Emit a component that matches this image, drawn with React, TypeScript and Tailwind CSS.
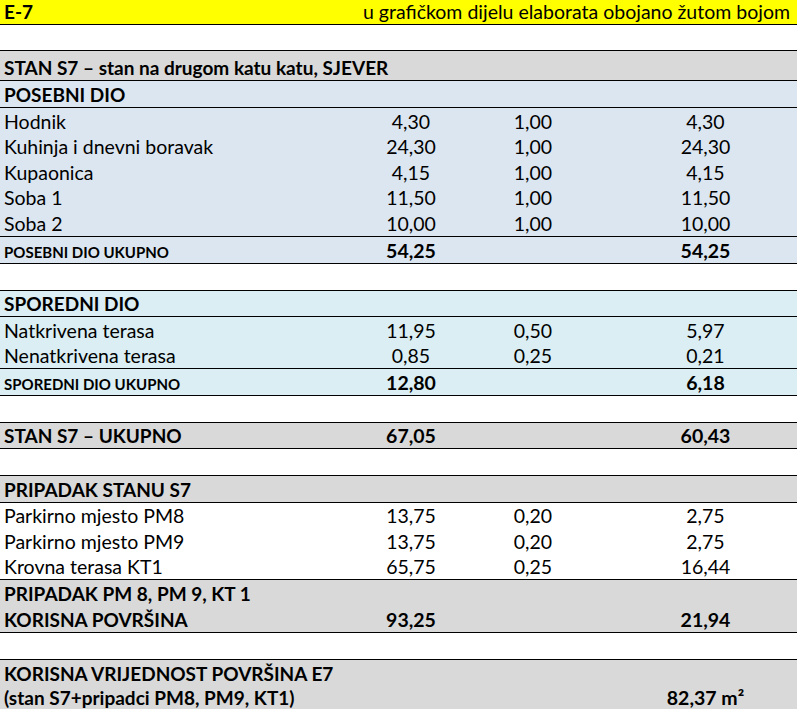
import React from "react";

type Row = {
  label?: string;
  a?: string;
  b?: string;
  c?: string;
  h: number;
  bg?: string;
  bold?: boolean;
  small?: boolean;
  top?: boolean;
  bottom?: boolean;
  flush?: boolean;
};

const rows: Row[] = [
  { h: 25, label: "" },
  { h: 29, top: true, bottom: true, bg: "bg-[#d9d9d9]", bold: true, label: "STAN S7 – stan na drugom katu katu, SJEVER" },
  { h: 26, bottom: true, bg: "bg-[#dce6f1]", bold: true, label: "POSEBNI DIO" },
  { h: 26, bg: "bg-[#dce6f1]", label: "Hodnik", a: "4,30", b: "1,00", c: "4,30" },
  { h: 25, bg: "bg-[#dce6f1]", label: "Kuhinja i dnevni boravak", a: "24,30", b: "1,00", c: "24,30" },
  { h: 26, bg: "bg-[#dce6f1]", label: "Kupaonica", a: "4,15", b: "1,00", c: "4,15" },
  { h: 25, bg: "bg-[#dce6f1]", label: "Soba 1", a: "11,50", b: "1,00", c: "11,50" },
  { h: 26, bottom: true, bg: "bg-[#dce6f1]", label: "Soba 2", a: "10,00", b: "1,00", c: "10,00" },
  { h: 26, bottom: true, bg: "bg-[#dce6f1]", bold: true, small: true, label: "POSEBNI DIO UKUPNO", a: "54,25", c: "54,25" },
  { h: 26, label: "" },
  { h: 25, top: true, bottom: true, bg: "bg-[#daeef3]", bold: true, label: "SPOREDNI DIO" },
  { h: 26, bg: "bg-[#daeef3]", label: "Natkrivena terasa", a: "11,95", b: "0,50", c: "5,97" },
  { h: 25, bottom: true, bg: "bg-[#daeef3]", label: "Nenatkrivena terasa", a: "0,85", b: "0,25", c: "0,21" },
  { h: 26, bottom: true, bg: "bg-[#daeef3]", bold: true, small: true, label: "SPOREDNI DIO UKUPNO", a: "12,80", c: "6,18" },
  { h: 26, label: "" },
  { h: 25, top: true, bottom: true, bg: "bg-[#d9d9d9]", bold: true, label: "STAN S7 – UKUPNO", a: "67,05", c: "60,43" },
  { h: 26, label: "" },
  { h: 26, top: true, bottom: true, bg: "bg-[#d9d9d9]", bold: true, label: "PRIPADAK STANU S7" },
  { h: 25, label: "Parkirno mjesto PM8", a: "13,75", b: "0,20", c: "2,75" },
  { h: 26, label: "Parkirno mjesto PM9", a: "13,75", b: "0,20", c: "2,75" },
  { h: 25, bottom: true, label: "Krovna terasa KT1", a: "65,75", b: "0,25", c: "16,44" },
  { h: 26, bg: "bg-[#d9d9d9]", bold: true, label: "PRIPADAK PM 8, PM 9, KT 1" },
  { h: 26, bottom: true, bg: "bg-[#d9d9d9]", bold: true, label: "KORISNA POVRŠINA", a: "93,25", c: "21,94" },
  { h: 26, label: "" },
  { h: 26, top: true, bg: "bg-[#d9d9d9]", bold: true, label: "KORISNA VRIJEDNOST POVRŠINA E7" },
  { h: 23, flush: true, bg: "bg-[#d9d9d9]", bold: true, label: "(stan S7+pripadci PM8, PM9, KT1)", c: "82,37 m²" },
];

function SheetRow({ row }: { row: Row }) {
  const weight = row.bold ? "font-bold" : "font-normal";
  const labelSize = row.small ? "text-[15px]" : row.bold ? "text-[19px]" : "text-[19.5px]";
  const height = row.h + (row.top ? 1 : 0) + (row.bottom ? 1 : 0);
  return (
    <div
      className={`grid grid-cols-[370px_82px_162px_1fr] items-end border-black ${row.flush ? "pb-[2px]" : "pb-[3px]"} ${row.bg ?? "bg-white"} ${row.top ? "border-t" : ""} ${row.bottom ? "border-b" : ""}`}
      style={{ height }}
    >
      <div className={`pl-[4px] whitespace-nowrap ${weight} ${labelSize}`}>{row.label}</div>
      <div className={`text-center text-[19.5px] ${weight}`}>{row.a}</div>
      <div className={`text-center text-[19.5px] ${weight}`}>{row.b}</div>
      <div className={`text-center text-[19.5px] ${weight}`}>{row.c}</div>
    </div>
  );
}

export default function App() {
  return (
    <div className="w-[797px] h-[709px] overflow-hidden bg-white text-black font-['Lato','Open_Sans',sans-serif] leading-none">
      <div className="flex h-[25px] items-end justify-between border-b border-black bg-[#ffff00] pb-[3px] pl-[4px] pr-[7px] text-[19.5px]">
        <span className="text-[19px] font-bold">E-7</span>
        <span>u grafičkom dijelu elaborata obojano žutom bojom</span>
      </div>
      {rows.map((row, i) => (
        <SheetRow key={i} row={row} />
      ))}
    </div>
  );
}
